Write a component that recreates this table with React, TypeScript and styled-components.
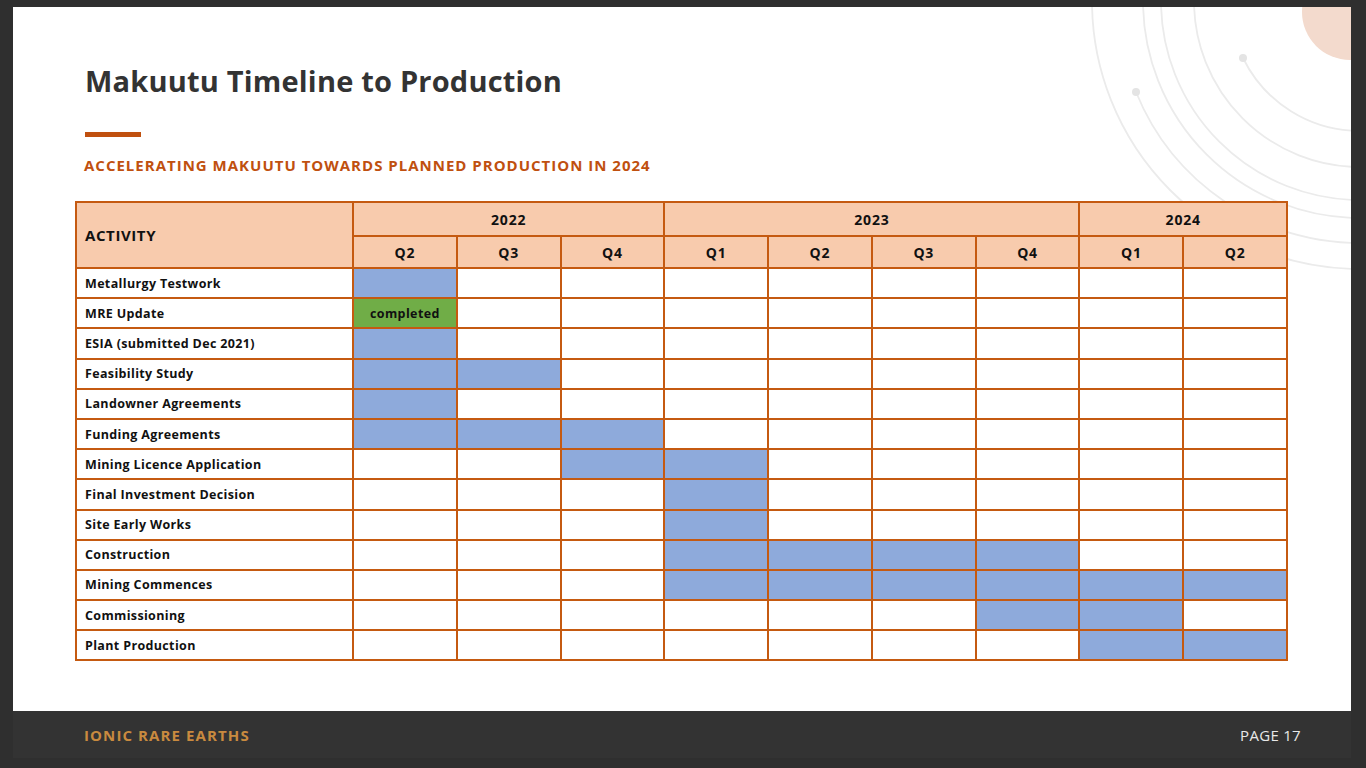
import React from "react";
import styled, { createGlobalStyle } from "styled-components";

const Global = createGlobalStyle`
  html, body { margin: 0; padding: 0; background: #2f2f2f; }
  body { font-family: "Open Sans", sans-serif; }
  * { box-sizing: border-box; }
`;

const Screen = styled.div`
  width: 1366px;
  height: 768px;
  padding: 7px 15px 0 13px;
  background: #2f2f2f;
  overflow: hidden;
`;

const Slide = styled.div`
  position: relative;
  width: 1338px;
  height: 704px;
  background: #ffffff;
  overflow: hidden;
  padding: 57px 0 0 62px;
`;

const Decor = styled.svg`
  position: absolute;
  top: 0;
  right: 0;
  pointer-events: none;
`;

const Content = styled.div`
  position: relative;
  display: flex;
  flex-direction: column;
`;

const Title = styled.h1`
  margin: 0 0 0 10px;
  font-family: "Open Sans", sans-serif;
  font-weight: 700;
  font-size: 29px;
  line-height: 34px;
  color: #333333;
  letter-spacing: 0.2px;
`;

const Accent = styled.div`
  width: 56px;
  height: 5px;
  background: #c0500f;
  margin: 34px 0 0 10px;
`;

const Subtitle = styled.h2`
  margin: 19px 0 0 9px;
  font-family: "Open Sans", sans-serif;
  font-weight: 700;
  font-size: 15px;
  line-height: 18px;
  color: #c0500f;
  letter-spacing: 1px;
`;

const Grid = styled.div`
  margin-top: 27px;
  width: 1213px;
  display: grid;
  grid-template-columns: 277px repeat(9, 1fr);
  grid-template-rows: 34px 32px repeat(13, 30.2px);
  border-top: 2px solid #c55a11;
  border-left: 2px solid #c55a11;
`;

const HeadCell = styled.div<{ $col?: string; $row?: string; $left?: boolean }>`
  grid-column: ${(p) => p.$col || "auto"};
  grid-row: ${(p) => p.$row || "auto"};
  background: #f8cbad;
  border-right: 2px solid #c55a11;
  border-bottom: 2px solid #c55a11;
  display: flex;
  align-items: center;
  justify-content: ${(p) => (p.$left ? "flex-start" : "center")};
  padding-left: ${(p) => (p.$left ? "8px" : "0")};
  font-family: "Open Sans", sans-serif;
  font-weight: 700;
  font-size: ${(p) => (p.$left ? "15px" : "14px")};
  letter-spacing: ${(p) => (p.$left ? "0.6px" : "0.8px")};
  color: #111111;
`;

const NameCell = styled.div`
  border-right: 2px solid #c55a11;
  border-bottom: 2px solid #c55a11;
  display: flex;
  align-items: center;
  padding-left: 8px;
  font-family: "Open Sans", sans-serif;
  font-weight: 700;
  font-size: 12.5px;
  letter-spacing: 0.35px;
  color: #111111;
  white-space: nowrap;
`;

const BarCell = styled.div<{ $fill: "none" | "blue" | "green" }>`
  border-right: 2px solid #c55a11;
  border-bottom: 2px solid #c55a11;
  background: ${(p) =>
    p.$fill === "blue" ? "#8eaadb" : p.$fill === "green" ? "#70ad47" : "#ffffff"};
  display: flex;
  align-items: center;
  justify-content: center;
  font-family: "Open Sans", sans-serif;
  font-weight: 700;
  font-size: 12.5px;
  letter-spacing: 0.4px;
  color: #111111;
`;

const Footer = styled.div`
  width: 1338px;
  height: 47px;
  background: #333333;
  display: flex;
  align-items: center;
  justify-content: space-between;
  padding: 0 50px 0 71px;
  font-family: "Open Sans", sans-serif;
  font-size: 15px;
`;

const Brand = styled.span`
  color: #c98a3f;
  font-weight: 700;
  letter-spacing: 1.1px;
`;

const Page = styled.span`
  color: #e8e8e8;
  font-weight: 400;
  letter-spacing: 0.3px;
`;

type Row = { name: string; bars: number[]; green?: boolean };

const rows: Row[] = [
  { name: "Metallurgy Testwork", bars: [0] },
  { name: "MRE Update", bars: [0], green: true },
  { name: "ESIA (submitted Dec 2021)", bars: [0] },
  { name: "Feasibility Study", bars: [0, 1] },
  { name: "Landowner Agreements", bars: [0] },
  { name: "Funding Agreements", bars: [0, 1, 2] },
  { name: "Mining Licence Application", bars: [2, 3] },
  { name: "Final Investment Decision", bars: [3] },
  { name: "Site Early Works", bars: [3] },
  { name: "Construction", bars: [3, 4, 5, 6] },
  { name: "Mining Commences", bars: [3, 4, 5, 6, 7, 8] },
  { name: "Commissioning", bars: [6, 7] },
  { name: "Plant Production", bars: [7, 8] },
];

const quarters = ["Q2", "Q3", "Q4", "Q1", "Q2", "Q3", "Q4", "Q1", "Q2"];

function Decoration() {
  // svg origin = page (1051, 7); rings centred near page (1360, 1)
  const cx = 309;
  const cy = -6;
  const rings = [268, 217, 199, 166];
  const stroke = "#ebebeb";
  return (
    <Decor width="300" height="320" viewBox="0 0 300 320">
      {rings.map((r) => (
        <circle key={r} cx={cx} cy={cy} r={r} fill="none" stroke={stroke} strokeWidth="1.8" />
      ))}
      <path d="M 85 85 A 242 242 0 0 0 309 236" fill="none" stroke={stroke} strokeWidth="1.8" />
      <circle cx={85} cy={85} r={4} fill="#e4e4e4" />
      <path d="M 192 51 A 130 130 0 0 0 309 124" fill="none" stroke={stroke} strokeWidth="1.8" />
      <circle cx={192} cy={51} r={4} fill="#e4e4e4" />
      <circle cx={299} cy={5} r={48} fill="#f3dacd" />
    </Decor>
  );
}

export default function App() {
  return (
    <>
      <Global />
      <Screen>
        <Slide>
          <Decoration />
          <Content>
            <Title>Makuutu Timeline to Production</Title>
            <Accent />
            <Subtitle>ACCELERATING MAKUUTU TOWARDS PLANNED PRODUCTION IN 2024</Subtitle>
            <Grid>
              <HeadCell $col="1" $row="1 / span 2" $left>
                ACTIVITY
              </HeadCell>
              <HeadCell $col="2 / span 3" $row="1">
                2022
              </HeadCell>
              <HeadCell $col="5 / span 4" $row="1">
                2023
              </HeadCell>
              <HeadCell $col="9 / span 2" $row="1">
                2024
              </HeadCell>
              {quarters.map((q, i) => (
                <HeadCell key={i} $row="2">
                  {q}
                </HeadCell>
              ))}
              {rows.map((r) => (
                <React.Fragment key={r.name}>
                  <NameCell>{r.name}</NameCell>
                  {quarters.map((_, i) => {
                    const on = r.bars.includes(i);
                    return (
                      <BarCell key={i} $fill={on ? (r.green ? "green" : "blue") : "none"}>
                        {on && r.green ? "completed" : null}
                      </BarCell>
                    );
                  })}
                </React.Fragment>
              ))}
            </Grid>
          </Content>
        </Slide>
        <Footer>
          <Brand>IONIC RARE EARTHS</Brand>
          <Page>PAGE 17</Page>
        </Footer>
      </Screen>
    </>
  );
}
